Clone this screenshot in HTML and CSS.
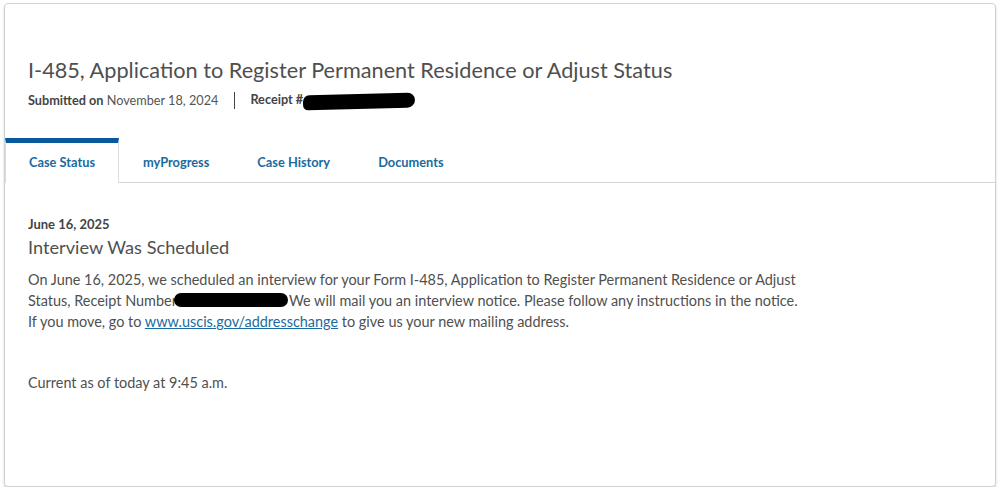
FILE: index.html
```html
<!DOCTYPE html>
<html lang="en">
<head>
<meta charset="utf-8">
<title>Case Status</title>
<link rel="stylesheet" href="styles.css">
</head>
<body>
<div class="card">
  <header class="head">
    <h1 class="title">I-485, Application to Register Permanent Residence or Adjust Status</h1>
    <div class="meta">
      <span class="meta-item"><b>Submitted on</b> November 18, 2024</span>
      <span class="sep"></span>
      <span class="meta-item"><b>Receipt #</b><span class="redact redact-receipt"></span></span>
    </div>
  </header>
  <nav class="tabs">
    <a class="tab active">Case Status</a>
    <a class="tab">myProgress</a>
    <a class="tab">Case History</a>
    <a class="tab">Documents</a>
    <span class="tab-fill"></span>
  </nav>
  <section class="content">
    <div class="date">June 16, 2025</div>
    <h2 class="status">Interview Was Scheduled</h2>
    <p class="desc">On June 16, 2025, we scheduled an interview for your Form I-485, Application to Register Permanent Residence or Adjust<br>Status, Receipt Number<span class="redact redact-num"></span>We will mail you an interview notice. Please follow any instructions in the notice.<br>If you move, go to <a class="link">www.uscis.gov/addresschange</a> to give us your new mailing address.</p>
    <p class="asof">Current as of today at 9:45 a.m.</p>
  </section>
</div>
</body>
</html>
```
FILE: styles.css
```css
html, body {
  margin: 0;
  padding: 0;
  background: #ffffff;
}
body {
  font-family: Lato, "Liberation Sans", sans-serif;
  color: #4d4d4d;
}
.card {
  margin: 3px 4px 0 4px;
  height: 482px;
  border: 1px solid #d2d2d2;
  border-radius: 4px;
  box-shadow: 0 2px 2px rgba(0, 0, 0, 0.22);
  display: flex;
  flex-direction: column;
  overflow: hidden;
}
.head {
  padding: 53px 23px 0 23px;
  height: 81px;
}
.title {
  margin: 0;
  font-size: 21.7px;
  font-weight: 400;
  line-height: 26px;
  color: #4f4f4f;
}
.meta {
  display: flex;
  align-items: center;
  margin-top: 8px;
  font-size: 12.7px;
  color: #555;
  height: 18px;
}
.meta b {
  font-weight: 700;
  color: #444;
}
.sep {
  width: 1px;
  height: 17px;
  background: #444;
  margin: 0 15px 0 16px;
}
.redact {
  display: inline-block;
  background: #000;
  vertical-align: middle;
}
.redact-receipt {
  width: 112px;
  height: 15px;
  border-radius: 9px 10px 11px 7px;
  transform: rotate(-1.5deg);
}
.tabs {
  display: flex;
  height: 45px;
}
.tab {
  padding: 16px 24px 0 24px;
  font-size: 12.8px;
  font-weight: 700;
  color: #1b6a9f;
  border-bottom: 1px solid #d6d6d6;
  box-sizing: border-box;
  height: 45px;
}
.tab.active {
  border-top: 5px solid #08589e;
  border-left: 1px solid #dcdcdc;
  border-right: 1px solid #dcdcdc;
  border-bottom: none;
  padding-top: 11px;
  padding-left: 23px;
  padding-right: 23px;
}
.tab-fill {
  flex: 1;
  border-bottom: 1px solid #d6d6d6;
}
.content {
  padding: 33px 23px 0 23px;
}
.date {
  font-size: 13px;
  font-weight: 700;
  color: #444;
  line-height: 16px;
}
.status {
  margin: 3px 0 0 0;
  font-size: 18.2px;
  font-weight: 400;
  color: #4f4f4f;
  line-height: 24px;
}
.desc {
  margin: 10px 0 0 0;
  font-size: 14.45px;
  line-height: 21px;
  color: #505050;
}
.redact-num {
  width: 114px;
  height: 14px;
  border-radius: 7px;
  margin: 0 1px 0 -3px;
  vertical-align: -1px;
}
.link {
  color: #1a6b9e;
  text-decoration: underline;
}
.asof {
  margin: 40px 0 0 0;
  font-size: 14.45px;
  line-height: 21px;
  color: #505050;
}
```
